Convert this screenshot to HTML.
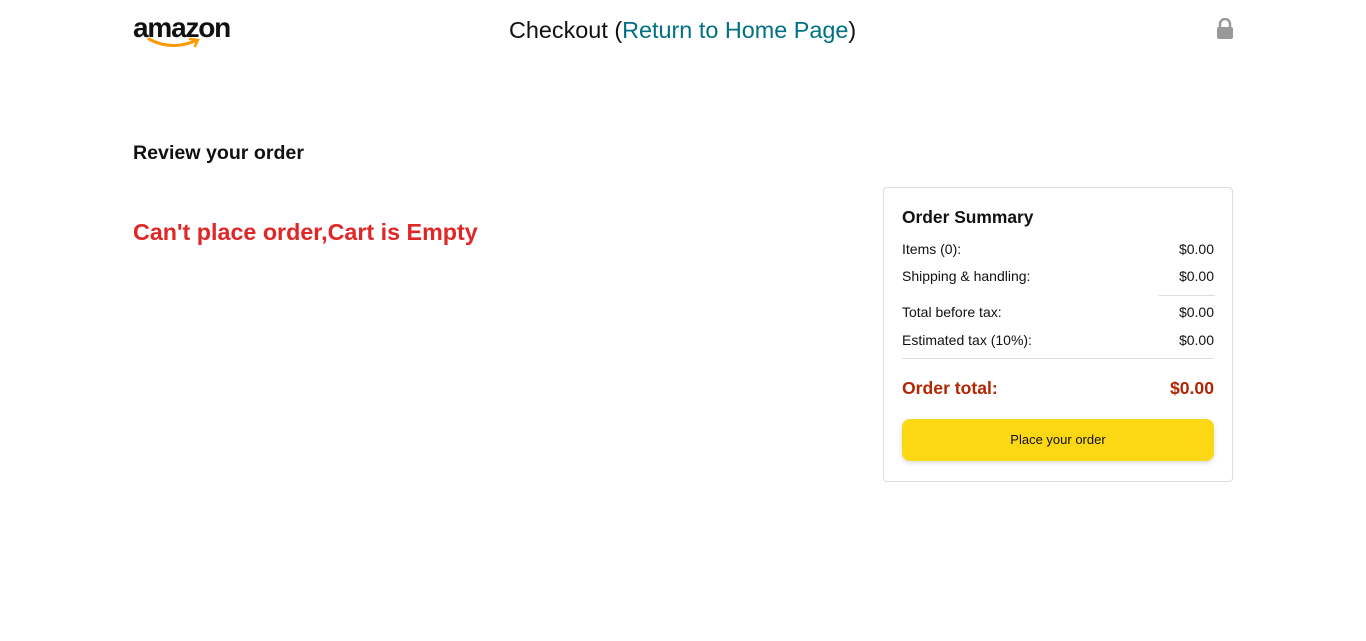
<!DOCTYPE html>
<html><head><meta charset="utf-8"><style>
*{margin:0;padding:0;box-sizing:border-box}
body{width:1366px;height:641px;background:#fff;font-family:"Liberation Sans",Arial,sans-serif;color:#111;position:relative;overflow:hidden}
.abs{position:absolute}
.logo{left:133px;top:14px;font-size:28px;font-weight:bold;letter-spacing:-1.2px;color:#111;line-height:28px}
.title{left:509px;top:16px;font-size:23.4px;line-height:28px;color:#111}
.title span{color:#007185}
.h2{left:133px;top:142px;font-size:19.6px;font-weight:bold;color:#111}
.err{left:133px;top:219px;font-size:23.3px;font-weight:bold;color:#e02727}
.box{left:883px;top:187px;width:350px;height:295px;border:1px solid #ddd;border-radius:4px}
.row{position:absolute;left:18px;right:18px;display:flex;justify-content:space-between;font-size:14px;color:#111}
.line{position:absolute;height:1px;background:#ddd}
.btn{position:absolute;left:18px;right:18px;top:231px;height:42px;background:#fcd814;border-radius:8px;font-size:13px;text-align:center;line-height:42px;color:#111;box-shadow:0 2px 5px rgba(15,17,17,.15)}
</style></head><body>
<div class="abs logo">amazon</div>
<svg class="abs" style="left:147px;top:36px" width="56" height="14" viewBox="0 0 56 14"><path d="M2 3 Q24 15 48 5" stroke="#f90" stroke-width="3" fill="none" stroke-linecap="round"/><path d="M43 3 L51 4 L48 10" stroke="#f90" stroke-width="2.5" fill="none" stroke-linecap="round"/></svg>
<div class="abs title">Checkout (<span>Return to Home Page</span>)</div>
<svg class="abs" style="left:1216px;top:18px" width="18" height="22" viewBox="0 0 18 22"><path d="M4 10V6a5 5 0 0 1 10 0v4" stroke="#999" stroke-width="2.5" fill="none"/><rect x="1" y="9" width="16" height="12" rx="2" fill="#999"/></svg>
<div class="abs h2">Review your order</div>
<div class="abs err">Can't place order,Cart is Empty</div>
<div class="abs box">
<div style="position:absolute;left:18px;top:19px;font-size:17.4px;font-weight:bold">Order Summary</div>
<div class="row" style="top:53px"><span>Items (0):</span><span>$0.00</span></div>
<div class="row" style="top:80px"><span>Shipping &amp; handling:</span><span>$0.00</span></div>
<div class="line" style="left:275px;width:56px;top:107px"></div>
<div class="row" style="top:116px"><span>Total before tax:</span><span>$0.00</span></div>
<div class="row" style="top:144px"><span>Estimated tax (10%):</span><span>$0.00</span></div>
<div class="line" style="left:18px;right:18px;top:170px"></div>
<div class="row" style="top:190px;font-size:17.6px;font-weight:bold;color:#b12704"><span>Order total:</span><span>$0.00</span></div>
<div class="btn">Place your order</div>
</div>
</body></html>
